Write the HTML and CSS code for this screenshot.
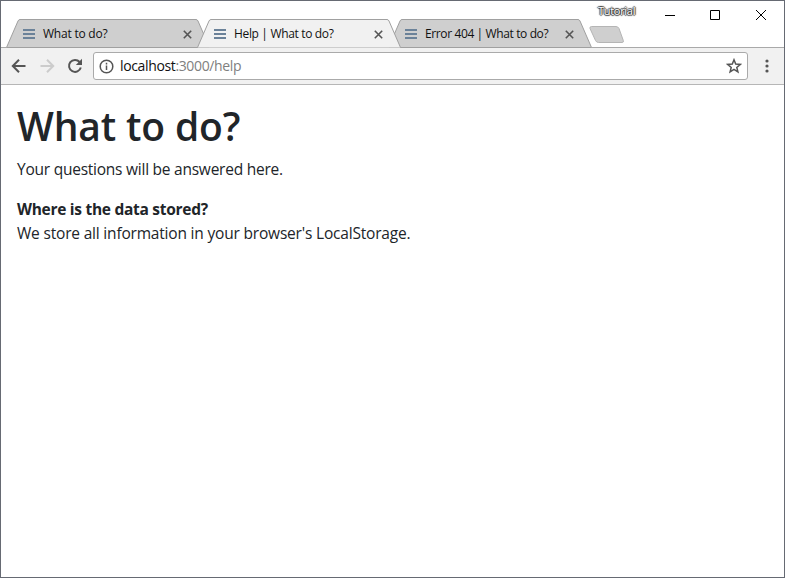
FILE: index.html
```html
<!DOCTYPE html>
<html lang="en">
<head>
<meta charset="utf-8">
<title>Help | What to do?</title>
<link rel="stylesheet" href="styles.css">
</head>
<body>
<div class="window">
  <header class="strip">
    <div class="tabs">
      <div class="tab">
        <svg class="shape" viewBox="0 0 202 29"><path d="M-.5 28.500L11 2Q11.700.5 13 .5H189Q190.300.5 191 2L202.500 28.500"/></svg>
        <span class="fav"></span><span class="label t1">What to do?</span>
        <svg class="close" viewBox="0 0 9 9"><path d="M.8.8l7.400 7.400M8.200.8L.8 8.200"/></svg>
      </div>
      <div class="tab active">
        <svg class="shape" viewBox="0 0 202 29"><path d="M-.5 28.500L11 2Q11.700.5 13 .5H189Q190.300.5 191 2L202.500 28.500"/></svg>
        <span class="fav"></span><span class="label t2">Help | What to do?</span>
        <svg class="close" viewBox="0 0 9 9"><path d="M.8.8l7.400 7.400M8.200.8L.8 8.200"/></svg>
      </div>
      <div class="tab">
        <svg class="shape" viewBox="0 0 202 29"><path d="M-.5 28.500L11 2Q11.700.5 13 .5H189Q190.300.5 191 2L202.500 28.500"/></svg>
        <span class="fav"></span><span class="label t3">Error 404 | What to do?</span>
        <svg class="close" viewBox="0 0 9 9"><path d="M.8.8l7.400 7.400M8.200.8L.8 8.200"/></svg>
      </div>
    </div>
    <svg class="newtab" viewBox="0 0 36 18"><path d="M2.500.5H27Q29 .5 30 2.500L34.300 14.500Q35 16.500 33 16.500H9.500Q7.500 16.500 6.500 14.500L1 2.500Q.5.5 2.500.5Z"/></svg>
    <span class="profile">Tutorial</span>
    <div class="controls">
      <svg viewBox="0 0 11 11"><path d="M1 5.500h10"/></svg>
      <svg viewBox="0 0 11 11"><path d="M.5.5h9v9h-9z"/></svg>
      <svg viewBox="0 0 11 11"><path d="M0 0l10 10M10 0L0 10"/></svg>
    </div>
  </header>
  <nav class="toolbar">
    <svg class="nav" viewBox="0 0 16 16"><path d="M14.500 8H2M8 1.800L1.800 8 8 14.200"/></svg>
    <svg class="nav off" viewBox="0 0 16 16"><path d="M1.500 8H14M8 1.800L14.200 8 8 14.200"/></svg>
    <svg class="nav" viewBox="0 0 16 16"><path d="M12.600 4A6 6 0 1 0 13.800 9.500"/><path class="fill" d="M15 .8V7H8.800z"/></svg>
    <div class="address">
      <svg class="info" viewBox="0 0 15 15"><circle cx="7.500" cy="7.500" r="6.300"/><path d="M7.500 6.500V11M7.500 3.800v1.600"/></svg>
      <span class="url">localhost<span>:3000/help</span></span>
      <svg class="star" viewBox="0 0 16 16"><path d="M8 1.800l1.700 4.300 4.600.3-3.500 3 1.100 4.500L8 11.400l-3.900 2.500 1.100-4.500-3.500-3 4.600-.3z"/></svg>
    </div>
    <svg class="menu" viewBox="0 0 4 14"><circle cx="2" cy="2" r="1.600"/><circle cx="2" cy="7" r="1.600"/><circle cx="2" cy="12" r="1.600"/></svg>
  </nav>
  <main class="page">
    <h1>What to do?</h1>
    <p class="intro">Your questions will be answered here.</p>
    <p class="question">Where is the data stored?</p>
    <p class="answer">We store all information in your browser's LocalStorage.</p>
  </main>
</div>
</body>
</html>
```

FILE: styles.css
```css
* { box-sizing: border-box; }
body { margin: 0; font-family: "Open Sans", "Noto Sans", sans-serif; }
svg { display: block; flex: none; fill: none; }
.window { width: 785px; height: 578px; border: 1px solid #666a73; background: #fff; overflow: hidden; }
.strip { height: 47px; display: flex; position: relative; border-bottom: 1px solid #a9a9a9; }
.tabs { display: flex; padding: 18px 0 0 6px; height: 47px; }
.tab { position: relative; width: 202px; height: 29px; margin-right: -11px; padding-left: 16px; display: flex; align-items: center; flex: none; }
.tab.active { z-index: 1; }
.shape { position: absolute; left: 0; top: 0; width: 202px; height: 29px; overflow: visible; fill: #cfcfcf; stroke: #a0a0a0; }
.active .shape { fill: #f1f1f1; }
.tab:not(.active)::after { content: ""; position: absolute; left: 0; right: 0; bottom: 0; height: 1px; background: #a0a0a0; }
.fav { position: relative; width: 12px; height: 10px; border-top: 2px solid #6b8299; border-bottom: 2px solid #6b8299; background: linear-gradient(#6b8299, #6b8299) 0 2px / 12px 2px no-repeat; }
.label { position: relative; margin-left: 8px; font-size: 12px; line-height: 16px; width: 139px; white-space: nowrap; color: #111; }
.close { position: relative; margin-left: 1px; margin-top: 1px; width: 9px; height: 9px; stroke: #555; stroke-width: 1.6; }
.t1 { letter-spacing: -0.22px; }
.t2 { letter-spacing: -0.34px; }
.t3 { letter-spacing: -0.38px; }
.newtab { width: 36px; height: 18px; margin: 25px 0 0 9px; fill: #cfcfcf; stroke: #b5b5b5; }
.profile { margin: 2px 0 0 -27px; width: 44px; font-size: 11px; line-height: 15px; letter-spacing: -0.3px; color: #fff; text-shadow: 1px 0 1px #333, -1px 0 1px #333, 0 1px 1px #333, 0 -1px 1px #333; }
.controls { margin-left: auto; margin-right: 17px; padding-top: 9px; display: flex; gap: 35px; }
.controls svg { width: 11px; height: 11px; stroke: #000; }
.toolbar { height: 37px; display: flex; align-items: center; padding: 0 15px 0 10px; gap: 12px; background: #f1f1f1; border-bottom: 1px solid #b6b6b6; }
.nav { width: 16px; height: 16px; stroke: #555; stroke-width: 2; }
.off { stroke: #ccc; }
.fill { fill: #555; stroke: none; }
.address { flex: none; width: 655px; height: 28px; margin-left: -2px; display: flex; align-items: center; padding: 0 5px 0 5px; background: #fff; border: 1px solid #aaa; border-radius: 3px; }
.info { width: 15px; height: 15px; stroke: #555; stroke-width: 1.5; }
.url { margin-left: 6px; font-size: 14px; line-height: 20px; letter-spacing: -0.36px; color: #111; }
.url span { color: #808080; }
.star { margin-left: auto; width: 16px; height: 16px; stroke: #555; stroke-width: 1.5; }
.menu { width: 4px; height: 14px; margin-left: 5px; fill: #555; }
.page { padding: 18px 16px; color: #212529; font-size: 15.5px; letter-spacing: -0.19px; line-height: 24px; }
h1 { margin: -1px 0 7px; font-size: 39px; line-height: 48px; font-weight: 600; letter-spacing: -0.15px; }
p { margin: 0; white-space: nowrap; }
.intro { margin-bottom: 16px; letter-spacing: -0.24px; }
.question { font-weight: 700; letter-spacing: -0.28px; }
```
